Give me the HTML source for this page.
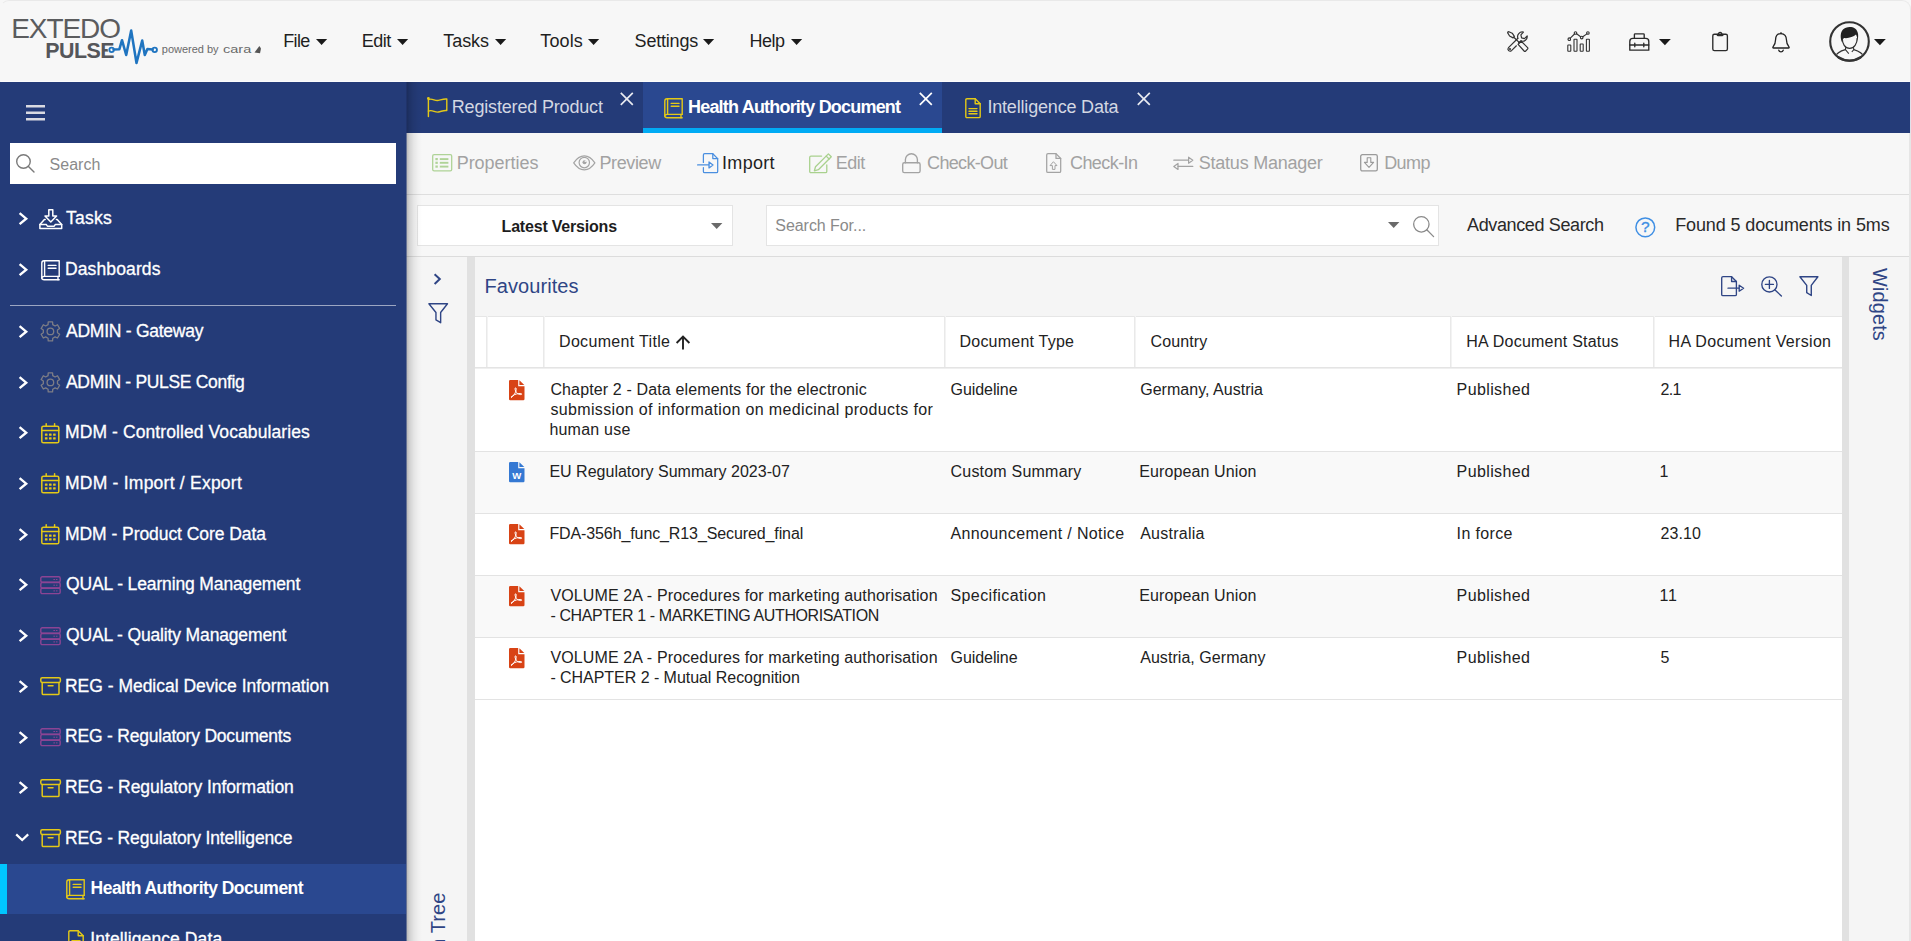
<!DOCTYPE html>
<html lang="en"><head><meta charset="utf-8"><title>EXTEDO PULSE - Health Authority Document</title>
<style>
html,body{margin:0;padding:0;background:#fff}
body{width:1911px;height:941px;overflow:hidden;font-family:"Liberation Sans", sans-serif}
#app{position:relative;width:1911px;height:941px;overflow:hidden;background:#fff;font-family:"Liberation Sans", sans-serif}
.b{position:absolute}
.t{position:absolute;white-space:pre;font-family:"Liberation Sans", sans-serif}
.ic{position:absolute;overflow:visible}
.z1{z-index:1}
.z4{z-index:4}
</style></head>
<body>
<div id="app">
<header id="app-header">
<div class="b" style="left:0px;top:0px;width:1911px;height:82px;background:#f7f7f7;"></div>
<div class="b" style="left:0px;top:81px;width:1911px;height:1px;background:#fcfcfc;"></div>
<div class="b" style="left:0;top:0;width:1911px;height:300px;box-sizing:border-box;border:1px solid #e9e9e9;border-left-color:#f7f7f7;border-bottom:none;border-radius:9px 9px 0 0"></div>
<svg class="ic z1" style="left:108px;top:28px" width="50" height="38" viewBox="0 0 50 38" ><circle cx="3.6" cy="21.8" r="3.9" fill="#f7f7f7"/><path d="M5.6 21.4 L11.4 21.2 L14.0 12.2 L18.2 27.0 L23.2 2.6 L28.5 35.0 L34.2 12.6 L36.8 27.0 L39.4 21.0 L44.6 21.4" fill="none" stroke="#1f74c0" stroke-width="2.55" stroke-linejoin="round" stroke-linecap="round"/><circle cx="3.6" cy="21.8" r="2.25" fill="none" stroke="#1f74c0" stroke-width="1.85"/><circle cx="46.7" cy="21.8" r="2.25" fill="none" stroke="#1f74c0" stroke-width="1.85"/></svg>
<svg class="ic" style="left:254px;top:45px" width="8" height="9" viewBox="0 0 8 9" ><path d="M0.5 7.6L5.4 1L7 3.6L6 8.2Z" fill="#555"/></svg>
<svg class="ic" style="left:316.2px;top:39.2px" width="11.2" height="6" viewBox="0 0 11.2 6" ><path d="M0 0H11.2L5.6 6Z" fill="#1a1a1a"/></svg>
<svg class="ic" style="left:396.7px;top:39.2px" width="11.2" height="6" viewBox="0 0 11.2 6" ><path d="M0 0H11.2L5.6 6Z" fill="#1a1a1a"/></svg>
<svg class="ic" style="left:494.7px;top:39.2px" width="11.2" height="6" viewBox="0 0 11.2 6" ><path d="M0 0H11.2L5.6 6Z" fill="#1a1a1a"/></svg>
<svg class="ic" style="left:588.4px;top:39.2px" width="11.2" height="6" viewBox="0 0 11.2 6" ><path d="M0 0H11.2L5.6 6Z" fill="#1a1a1a"/></svg>
<svg class="ic" style="left:703.4px;top:39.2px" width="11.2" height="6" viewBox="0 0 11.2 6" ><path d="M0 0H11.2L5.6 6Z" fill="#1a1a1a"/></svg>
<svg class="ic" style="left:790.5px;top:39.2px" width="11.2" height="6" viewBox="0 0 11.2 6" ><path d="M0 0H11.2L5.6 6Z" fill="#1a1a1a"/></svg>
<svg class="ic" style="left:1507px;top:31.3px" width="21.4" height="20.8" viewBox="0 0 21.4 20.8" ><g fill="none" stroke="#333" stroke-width="1.2" stroke-linecap="round" stroke-linejoin="round" ><path d="M0.7 1.9 Q0.5 0.6 1.9 0.7 L5.2 2.2 L7.4 5.4 L6.1 6.9 L2.6 5 Z"/><path d="M6.8 6.2 L12.4 11.6"/><path d="M11.1 13.3 L14.3 10.3 L20.6 16.6 Q21.2 17.4 20.5 18.2 L18.7 20 Q17.9 20.7 17.1 20 Z"/><path d="M10.9 7.3 L1.5 16.6 Q0.2 18.1 1.6 19.6 Q3.1 20.9 4.5 19.6 L9.4 14.8"/><path d="M11.6 11.4 L13.9 9.9"/><path d="M10.9 7.3 A4.7 4.7 0 0 1 16.4 1.1 L13.9 3.9 L14.6 6.8 L17.5 7.6 L20.2 4.9 A4.7 4.7 0 0 1 13.9 9.9"/><circle cx="3" cy="18.1" r="0.45"/></g></svg>
<svg class="ic" style="left:1566.5px;top:31.2px" width="23.8" height="20.8" viewBox="0 0 23.8 20.8" ><g fill="none" stroke="#333" stroke-width="1.1" stroke-linecap="round" stroke-linejoin="round"  ><rect x="0.8" y="14" width="3" height="6.2" rx="0.4"/><rect x="7" y="8.2" width="3" height="12" rx="0.4"/><rect x="13.2" y="13" width="3" height="7.2" rx="0.4"/><rect x="19.4" y="8.2" width="3" height="12" rx="0.4"/><circle cx="2.3" cy="8.2" r="1.3"/><circle cx="8.5" cy="2" r="1.3"/><circle cx="14.7" cy="6.6" r="1.3"/><circle cx="20.9" cy="2" r="1.3"/><path d="M3.3 7.2L7.5 3M9.6 2.8L13.6 5.8M15.8 5.8L19.9 2.9"/></g></svg>
<svg class="ic" style="left:1628.8px;top:32.8px" width="20.6" height="18" viewBox="0 0 20.6 18" ><g fill="none" stroke="#2b2b2b" stroke-width="1.35" stroke-linecap="round" stroke-linejoin="round" ><path d="M5.4 5.4V1.6Q5.4 0.8 6.2 0.8H14.4Q15.2 0.8 15.2 1.6V5.4"/><path d="M0.8 17.2V8.4Q0.8 5.4 3.8 5.4H16.8Q19.8 5.4 19.8 8.4V17.2Z"/><path d="M0.8 12H19.8M5.8 10.2V13.8M14.8 10.2V13.8"/></g></svg>
<svg class="ic" style="left:1658.6px;top:39.2px" width="11.8" height="6.2" viewBox="0 0 11.8 6.2" ><path d="M0 0H11.8L5.9 6.2Z" fill="#1a1a1a"/></svg>
<svg class="ic" style="left:1712px;top:31.4px" width="16.2" height="20.4" viewBox="0 0 16.2 20.4" ><g fill="none" stroke="#2b2b2b" stroke-width="1.35" stroke-linecap="round" stroke-linejoin="round" ><rect x="0.8" y="3.2" width="14.6" height="16.4" rx="1.6"/><path d="M5.2 3.4Q5.2 4.6 6.2 4.6H10Q11 4.6 11 3.4"/><path d="M6.4 3.2A1.7 1.9 0 0 1 9.8 3.2"/></g></svg>
<svg class="ic" style="left:1772px;top:31.5px" width="18" height="20.6" viewBox="0 0 18 20.6" ><g fill="none" stroke="#222" stroke-width="1.3" stroke-linecap="round" stroke-linejoin="round" ><path d="M9 1.6C5.4 1.6 3.6 4.4 3.6 7.6C3.6 11.6 2.6 13.2 0.9 15.2Q0.7 16 1.5 16H16.5Q17.3 16 17.1 15.2C15.4 13.2 14.4 11.6 14.4 7.6C14.4 4.4 12.6 1.6 9 1.6Z"/><path d="M9 1.6V0.7"/><path d="M6.8 18.2A2.3 2.3 0 0 0 11.2 18.2"/></g></svg>
<svg class="ic" style="left:1829px;top:21.2px" width="41" height="41" viewBox="0 0 41 41" ><defs><clipPath id="avc"><circle cx="20.5" cy="20.5" r="18.4"/></clipPath></defs><circle cx="20.5" cy="20.5" r="19.3" fill="none" stroke="#333" stroke-width="2.1"/><g clip-path="url(#avc)"><path d="M13.2 21.6C11.2 17.6 11 11.6 14 8.6C16.6 5.8 22.6 5.2 26 7.6C29.6 10.2 29.8 15.4 28.4 20.4C28.4 17.6 28 15.4 27 13.6C24.4 16 19.2 17.6 15 17C14 17.8 13.4 19.4 13.2 21.6Z" fill="#222"/><path d="M13.3 17.6C13.2 22.8 16 27.4 20.6 27.4C25.2 27.4 28.2 22.8 28.2 17" fill="none" stroke="#333" stroke-width="1.2"/><path d="M16.8 26.2L16.4 28.6L19.8 32.6M24.4 26.2L24.8 28.6L22.8 31" fill="none" stroke="#333" stroke-width="1.1"/><path d="M5.6 36.4C7.6 31.6 11 30 16.4 28.6M35.4 36.4C33.4 31.6 30 30 24.8 28.6" fill="none" stroke="#333" stroke-width="1.3"/></g><path d="M9.4 36.2Q20.5 43 31.6 36.2" fill="none" stroke="#333" stroke-width="2.3" stroke-linecap="round"/></svg>
<svg class="ic" style="left:1873.8px;top:39.3px" width="11.8" height="6.2" viewBox="0 0 11.8 6.2" ><path d="M0 0H11.8L5.9 6.2Z" fill="#1a1a1a"/></svg>
<span class="t" style="font-size:28px;line-height:35px;color:#5b5c5e;letter-spacing:-1.070px;left:11.20px;top:11.00px;">EXTEDO</span>
<span class="t" style="font-size:21.4px;line-height:27px;color:#55565a;font-weight:700;letter-spacing:-0.512px;left:45.30px;top:37.50px;">PULSE</span>
<span class="t" style="font-size:11px;line-height:14px;color:#6a6a6a;letter-spacing:-0.019px;left:161.80px;top:41.60px;">powered by</span>
<span class="t" style="font-size:11px;line-height:14px;color:#6a6a6a;left:222.60px;top:41.60px;transform-origin:0.00px 0;transform:scaleX(1.3195);">cara</span>
<span class="t" style="font-size:18px;line-height:22px;color:#1f1f1f;letter-spacing:-0.631px;left:283.20px;top:29.60px;">File</span>
<span class="t" style="font-size:18px;line-height:22px;color:#1f1f1f;letter-spacing:-0.505px;left:361.80px;top:29.60px;">Edit</span>
<span class="t" style="font-size:18px;line-height:22px;color:#1f1f1f;letter-spacing:-0.078px;left:443.30px;top:29.60px;">Tasks</span>
<span class="t" style="font-size:18px;line-height:22px;color:#1f1f1f;letter-spacing:0.120px;left:540.30px;top:29.60px;">Tools</span>
<span class="t" style="font-size:18px;line-height:22px;color:#1f1f1f;letter-spacing:-0.206px;left:634.60px;top:29.60px;">Settings</span>
<span class="t" style="font-size:18px;line-height:22px;color:#1f1f1f;letter-spacing:-0.470px;left:749.40px;top:29.60px;">Help</span>
</header>
<div id="tab-bar">
<div class="b" style="left:406px;top:82px;width:1505px;height:51px;background:#243b78;"></div>
<div class="b" style="left:643px;top:82px;width:299.4px;height:51px;background:#2a4890;"></div>
<div class="b" style="left:643px;top:127.8px;width:299.4px;height:5.2px;background:#01abf4;"></div>
<svg class="ic" style="left:426.7px;top:97.2px" width="20.6" height="20.4" viewBox="0 0 20.6 20.4" ><g fill="none" stroke="#e4c917" stroke-width="1.4" stroke-linecap="round" stroke-linejoin="round" ><path d="M1.4 1.6V19.6"/><path d="M1.4 2.6C5 0.6 8 4.4 11.4 3.4C14.6 2.6 16.8 1.6 19.8 2V13.6C16.8 13.2 14.6 14.4 11.4 15C8 15.8 5 12.2 1.4 14.2"/><circle cx="1.4" cy="1.3" r="0.7"/></g></svg>
<svg class="ic" style="left:620.4px;top:92.0px" width="13.6" height="13.6" viewBox="0 0 13.6 13.6" ><path d="M0.8 0.8L12.799999999999999 12.799999999999999M12.799999999999999 0.8L0.8 12.799999999999999" stroke="#e8eaf0" stroke-width="1.7" fill="none"/></svg>
<svg class="ic" style="left:664.3px;top:97.5px" width="19" height="20.5" viewBox="0 0 19 20.5" ><g fill="none" stroke="#e4c917" stroke-width="1.4" stroke-linecap="round" stroke-linejoin="round"  stroke-linejoin="miter"><path d="M18.2 16.4H3.2Q0.8 16.4 0.8 18.1Q0.8 19.7 3.2 19.7H18.2"/><path d="M0.8 18V3Q0.8 0.8 3 0.8H18.2V16.4"/><path d="M3.6 0.8V16.4"/><path d="M7.2 5.4H15M7.2 8.2H15"/><path d="M17 16.4V19.7"/></g></svg>
<svg class="ic" style="left:919.4px;top:92.0px" width="13.6" height="13.6" viewBox="0 0 13.6 13.6" ><path d="M0.8 0.8L12.799999999999999 12.799999999999999M12.799999999999999 0.8L0.8 12.799999999999999" stroke="#fff" stroke-width="1.7" fill="none"/></svg>
<svg class="ic" style="left:965px;top:97.6px" width="16" height="20.4" viewBox="0 0 16 20.4" ><g fill="none" stroke="#e4c917" stroke-width="1.4" stroke-linecap="round" stroke-linejoin="round"  stroke-linejoin="miter"><path d="M0.8 2Q0.8 0.8 2 0.8H10.2L15.2 5.8V18.4Q15.2 19.6 14 19.6H2Q0.8 19.6 0.8 18.4Z"/><path d="M10.2 0.8V5.8H15.2"/><path d="M4 10.6H12M4 13.2H12M4 15.8H12"/></g></svg>
<svg class="ic" style="left:1136.9px;top:92.0px" width="13.6" height="13.6" viewBox="0 0 13.6 13.6" ><path d="M0.8 0.8L12.799999999999999 12.799999999999999M12.799999999999999 0.8L0.8 12.799999999999999" stroke="#e8eaf0" stroke-width="1.7" fill="none"/></svg>
<span class="t" style="font-size:18px;line-height:22px;color:#d3d7e2;letter-spacing:-0.175px;left:451.80px;top:95.60px;">Registered Product</span>
<span class="t" style="font-size:18px;line-height:22px;color:#fff;font-weight:700;letter-spacing:-0.805px;left:688.00px;top:95.60px;">Health Authority Document</span>
<span class="t" style="font-size:18px;line-height:22px;color:#d3d7e2;letter-spacing:-0.180px;left:987.40px;top:95.60px;">Intelligence Data</span>
</div>
<div id="toolbar">
<div class="b" style="left:406px;top:133px;width:1505px;height:61px;background:#f7f7f7;"></div>
<div class="b" style="left:406px;top:194px;width:1505px;height:1px;background:#dedede;"></div>
<svg class="ic" style="left:431.7px;top:154.4px" width="20.4" height="17.6" viewBox="0 0 20.4 17.6" ><rect x="0.7" y="0.7" width="19" height="16.2" rx="1.4" fill="none" stroke="#afd397" stroke-width="1.3" stroke-linecap="round" stroke-linejoin="round" /><rect x="3.4" y="3.9999999999999996" width="2.4" height="2.2" fill="#afd397"/><path d="M7.8 5.1H16.4" stroke="#afd397" stroke-width="1.9" fill="none"/><rect x="3.4" y="7.700000000000001" width="2.4" height="2.2" fill="#afd397"/><path d="M7.8 8.8H16.4" stroke="#afd397" stroke-width="1.9" fill="none"/><rect x="3.4" y="11.5" width="2.4" height="2.2" fill="#afd397"/><path d="M7.8 12.6H16.4" stroke="#afd397" stroke-width="1.9" fill="none"/></svg>
<svg class="ic" style="left:572.9px;top:155.4px" width="22.6" height="15.6" viewBox="0 0 22.6 15.6" ><g fill="none" stroke="#a4a4a4" stroke-width="1.2" stroke-linecap="round" stroke-linejoin="round" ><path d="M0.7 7.8C5 1.4 8.4 0.8 11.3 0.8C14.2 0.8 17.6 1.4 21.9 7.8C17.6 14.2 14.2 14.8 11.3 14.8C8.4 14.8 5 14.2 0.7 7.8Z"/><circle cx="11.3" cy="7.6" r="5.2"/></g><circle cx="11.5" cy="7.2" r="2" fill="#a4a4a4"/><circle cx="12.3" cy="6.2" r="0.8" fill="#f7f7f7"/></svg>
<svg class="ic" style="left:696.6px;top:153px" width="21.4" height="20.4" viewBox="0 0 21.4 20.4" ><g fill="none" stroke="#4a8fe0" stroke-width="1.25" stroke-linecap="round" stroke-linejoin="round"  stroke-linejoin="miter"><path d="M6.4 9.4V2Q6.4 0.7 7.7 0.7H15.8L20.7 5.6V18.4Q20.7 19.7 19.4 19.7H7.7Q6.4 19.7 6.4 18.4V14.6"/><path d="M15.8 0.7V5.6H20.7"/><path d="M0.6 12H12"/><path d="M12 9V15L16 12Z"/></g></svg>
<svg class="ic" style="left:808.7px;top:153px" width="23.2" height="20.4" viewBox="0 0 23.2 20.4" ><g fill="none" stroke="#a9d18e" stroke-width="1.3" stroke-linecap="round" stroke-linejoin="round" ><path d="M17.8 12V18.4Q17.8 19.7 16.5 19.7H2Q0.7 19.7 0.7 18.4V4.4Q0.7 3.1 2 3.1H12.6"/><path d="M19.4 0.9L22.3 3.8L9.4 16.7L5.4 17.8L6.5 13.8Z"/><path d="M17.2 3.1L20.1 6"/></g></svg>
<svg class="ic" style="left:902px;top:153px" width="18.8" height="20.4" viewBox="0 0 18.8 20.4" ><g fill="none" stroke="#a3a3a3" stroke-width="1.35" stroke-linecap="round" stroke-linejoin="round" ><rect x="0.7" y="9.8" width="17.4" height="9.9" rx="1.6"/><path d="M3.4 9.8V6.6A6 5.9 0 0 1 15.4 6.6V9.8"/></g></svg>
<svg class="ic" style="left:1046.2px;top:153.1px" width="15.4" height="20.2" viewBox="0 0 15.4 20.2" ><g fill="none" stroke="#a3a3a3" stroke-width="1.25" stroke-linecap="round" stroke-linejoin="round"  stroke-linejoin="miter"><path d="M0.7 2Q0.7 0.7 2 0.7H10L14.7 5.4V18.2Q14.7 19.5 13.4 19.5H2Q0.7 19.5 0.7 18.2Z"/><path d="M10 0.7V5.4H14.7"/><path d="M7.7 9L11 12.6H9V16.4H6.4V12.6H4.4Z" stroke-width="1"/></g></svg>
<svg class="ic" style="left:1172.8px;top:156.1px" width="20.6" height="14.4" viewBox="0 0 20.6 14.4" ><g fill="none" stroke="#a3a3a3" stroke-width="1.2" stroke-linecap="round" stroke-linejoin="round"  stroke-linejoin="miter"><path d="M0.8 4.2H15.6"/><path d="M15.6 1.2V7.2L19.8 4.2Z"/><path d="M19.8 10.4H5"/><path d="M5 7.4V13.4L0.8 10.4Z"/></g></svg>
<svg class="ic" style="left:1360.2px;top:154.4px" width="18" height="17.6" viewBox="0 0 18 17.6" ><g fill="none" stroke="#9a9a9a" stroke-width="1.3" stroke-linecap="round" stroke-linejoin="round"  stroke-linejoin="miter"><rect x="0.7" y="0.7" width="16.6" height="16.2" rx="1.6"/><path d="M7.2 3.8H10.8V8.4H13.6L9 13.4L4.4 8.4H7.2Z" stroke-width="1.1"/></g></svg>
<span class="t" style="font-size:18px;line-height:22px;color:#a2a2a2;letter-spacing:-0.037px;left:456.70px;top:151.50px;">Properties</span>
<span class="t" style="font-size:18px;line-height:22px;color:#a2a2a2;letter-spacing:-0.387px;left:599.50px;top:151.50px;">Preview</span>
<span class="t" style="font-size:18px;line-height:22px;color:#1f1f1f;letter-spacing:0.278px;left:722.10px;top:151.50px;">Import</span>
<span class="t" style="font-size:18px;line-height:22px;color:#a2a2a2;letter-spacing:-0.505px;left:835.70px;top:151.50px;">Edit</span>
<span class="t" style="font-size:18px;line-height:22px;color:#a2a2a2;letter-spacing:-0.666px;left:927.10px;top:151.50px;">Check-Out</span>
<span class="t" style="font-size:18px;line-height:22px;color:#a2a2a2;letter-spacing:-0.574px;left:1070.00px;top:151.50px;">Check-In</span>
<span class="t" style="font-size:18px;line-height:22px;color:#a2a2a2;letter-spacing:-0.237px;left:1198.80px;top:151.50px;">Status Manager</span>
<span class="t" style="font-size:18px;line-height:22px;color:#a2a2a2;letter-spacing:-0.568px;left:1384.20px;top:151.50px;">Dump</span>
</div>
<div id="search-row">
<div class="b" style="left:406px;top:195px;width:1505px;height:61px;background:#f7f7f7;"></div>
<div class="b" style="left:406px;top:256px;width:1505px;height:1px;background:#dcdcdc;"></div>
<div class="b" style="left:416.6px;top:205.4px;width:316.6px;height:40.2px;background:#fff;border:1px solid #e4e4e4;box-sizing:border-box"></div>
<div class="b" style="left:766.2px;top:205.4px;width:673.2px;height:40.2px;background:#fff;border:1px solid #e4e4e4;box-sizing:border-box"></div>
<svg class="ic" style="left:711px;top:223px" width="11.4" height="6" viewBox="0 0 11.4 6" ><path d="M0 0H11.4L5.7 6Z" fill="#6a6a6a"/></svg>
<svg class="ic" style="left:1387.6px;top:222.2px" width="11.4" height="6" viewBox="0 0 11.4 6" ><path d="M0 0H11.4L5.7 6Z" fill="#6a6a6a"/></svg>
<svg class="ic" style="left:1413px;top:216px" width="21.4" height="21.4" viewBox="0 0 21.4 21.4" ><g fill="none" stroke="#8a8a8a" stroke-width="1.3" stroke-linecap="round" stroke-linejoin="round" ><circle cx="8.35" cy="8.35" r="7.70"/><path d="M13.80 13.80L20.60 20.60"/></g></svg>
<svg class="ic" style="left:1635.3px;top:216.8px" width="20.6" height="20.6" viewBox="0 0 20.6 20.6" ><circle cx="10.3" cy="10.3" r="9.4" fill="none" stroke="#3f8fe4" stroke-width="1.5" stroke-linecap="round" stroke-linejoin="round" /><text x="10.3" y="15.4" text-anchor="middle" font-family="Liberation Sans, sans-serif" font-size="15.5" fill="#3f8fe4" stroke="#3f8fe4" stroke-width="0.35">?</text></svg>
<span class="t" style="font-size:16px;line-height:20px;color:#1d1d1d;font-weight:700;letter-spacing:-0.198px;left:501.60px;top:216.80px;">Latest Versions</span>
<span class="t" style="font-size:16px;line-height:20px;color:#8a8a8a;letter-spacing:-0.054px;left:775.30px;top:216.40px;">Search For...</span>
<span class="t" style="font-size:18px;line-height:22px;color:#2a2a2a;letter-spacing:-0.363px;left:1467.00px;top:213.80px;">Advanced Search</span>
<span class="t" style="font-size:18px;line-height:22px;color:#2a2a2a;letter-spacing:-0.114px;left:1675.20px;top:213.80px;">Found 5 documents in 5ms</span>
</div>
<main id="content">
<div class="b" style="left:406px;top:257px;width:61.6px;height:684px;background:#f5f5f5;"></div>
<div class="b" style="left:467px;top:257px;width:8px;height:684px;background:#e1e1e1;"></div>
<div class="b" style="left:474.6px;top:257px;width:1367.4px;height:58.6px;background:#f5f5f5;"></div>
<div class="b" style="left:474.6px;top:315.6px;width:1367.4px;height:625.4px;background:#fff;"></div>
<div class="b" style="left:1842px;top:257px;width:7px;height:684px;background:#e1e1e1;"></div>
<div class="b" style="left:1849px;top:257px;width:62px;height:684px;background:#f5f5f5;"></div>
<div class="b" style="left:1909.2px;top:133px;width:1.8px;height:808px;background:#e6e6e6;"></div>
<div class="b" style="left:1910px;top:82px;width:1px;height:51px;background:#dfe1ea;"></div>
<div class="b" style="left:474.6px;top:315.6px;width:1367.4px;height:1px;background:#e6e6e6;"></div>
<div class="b" style="left:474.6px;top:367px;width:1367.4px;height:1px;background:#e4e4e4;"></div>
<div class="b" style="left:474.6px;top:368px;width:1367.4px;height:1px;background:#efefef;"></div>
<div class="b" style="left:486px;top:316px;width:1px;height:51px;background:#e9e9e9;"></div>
<div class="b" style="left:487px;top:316px;width:1px;height:51px;background:#f3f3f3;"></div>
<div class="b" style="left:543px;top:316px;width:1px;height:51px;background:#e9e9e9;"></div>
<div class="b" style="left:544px;top:316px;width:1px;height:51px;background:#f3f3f3;"></div>
<div class="b" style="left:944px;top:316px;width:1px;height:51px;background:#e9e9e9;"></div>
<div class="b" style="left:945px;top:316px;width:1px;height:51px;background:#f3f3f3;"></div>
<div class="b" style="left:1134px;top:316px;width:1px;height:51px;background:#e9e9e9;"></div>
<div class="b" style="left:1135px;top:316px;width:1px;height:51px;background:#f3f3f3;"></div>
<div class="b" style="left:1450px;top:316px;width:1px;height:51px;background:#e9e9e9;"></div>
<div class="b" style="left:1451px;top:316px;width:1px;height:51px;background:#f3f3f3;"></div>
<div class="b" style="left:1653px;top:316px;width:1px;height:51px;background:#e9e9e9;"></div>
<div class="b" style="left:1654px;top:316px;width:1px;height:51px;background:#f3f3f3;"></div>
<div class="b" style="left:474.6px;top:450.5px;width:1367.4px;height:1.4px;background:#e3e3e3;"></div>
<div class="b" style="left:474.6px;top:451.5px;width:1367.4px;height:62.0px;background:#f9f9f9;"></div>
<div class="b" style="left:474.6px;top:512.5px;width:1367.4px;height:1.4px;background:#e3e3e3;"></div>
<div class="b" style="left:474.6px;top:574.5px;width:1367.4px;height:1.4px;background:#e3e3e3;"></div>
<div class="b" style="left:474.6px;top:575.5px;width:1367.4px;height:62.0px;background:#f9f9f9;"></div>
<div class="b" style="left:474.6px;top:636.5px;width:1367.4px;height:1.4px;background:#e3e3e3;"></div>
<div class="b" style="left:474.6px;top:698.5px;width:1367.4px;height:1.4px;background:#e3e3e3;"></div>
<svg class="ic" style="left:433.4px;top:273.4px" width="8.4" height="12.2" viewBox="0 0 8.4 12.2" ><path d="M1.6 1.2 L6.800000000000001 6.1 L1.6 11.0" fill="none" stroke="#2f4585" stroke-width="2.0" stroke-linejoin="miter"/></svg>
<svg class="ic" style="left:427.6px;top:302.6px" width="20.4" height="20.6" viewBox="0 0 20.4 20.6" ><path d="M0.9 0.8H19.5L12.65 9.48V19.700000000000003L7.96 16.89V9.48Z" fill="none" stroke="#2f4585" stroke-width="1.4" stroke-linecap="round" stroke-linejoin="round"  stroke-linejoin="miter"/></svg>
<svg class="ic" style="left:1721.2px;top:275.8px" width="23.4" height="20.4" viewBox="0 0 23.4 20.4" ><g fill="none" stroke="#2f4585" stroke-width="1.35" stroke-linecap="round" stroke-linejoin="round"  stroke-linejoin="miter"><path d="M15.4 5.5V18.4Q15.4 19.7 14.1 19.7H2Q0.7 19.7 0.7 18.4V2Q0.7 0.7 2 0.7H10.6L15.4 5.5"/><path d="M10.6 0.7V5.5H15.4"/><path d="M7 12.2H18"/><path d="M18.2 9.2V15.2L22.6 12.2Z"/></g></svg>
<svg class="ic" style="left:1760.6px;top:276px" width="21.4" height="20.8" viewBox="0 0 21.4 20.8" ><g fill="none" stroke="#2f4585" stroke-width="1.35" stroke-linecap="round" stroke-linejoin="round" ><circle cx="8.4" cy="8.4" r="7.6"/><path d="M13.8 13.8L20.4 20"/><path d="M4.4 8.4H12.4M8.4 4.4V12.4"/></g></svg>
<svg class="ic" style="left:1799.2px;top:275.9px" width="19.8" height="20.4" viewBox="0 0 19.8 20.4" ><path d="M0.9 0.8H18.900000000000002L12.28 9.38V19.5L7.72 16.73V9.38Z" fill="none" stroke="#2f4585" stroke-width="1.4" stroke-linecap="round" stroke-linejoin="round"  stroke-linejoin="miter"/></svg>
<svg class="ic" style="left:675px;top:334.6px" width="16" height="15" viewBox="0 0 16 15" ><path d="M8 14.4V1.6M1.6 8L8 1.6L14.4 8" fill="none" stroke="#222" stroke-width="1.9"/></svg>
<svg class="ic" style="left:508.8px;top:379.90000000000003px" width="15.5" height="20.3" viewBox="0 0 15.5 20.3" ><path d="M1.2 0H9.2V6.2H15.5V19.1Q15.5 20.3 14.3 20.3H1.2Q0 20.3 0 19.1V1.2Q0 0 1.2 0Z" fill="#d84315"/><path d="M10.4 0.2L15.3 5H10.4Z" fill="#d84315"/><g fill="none" stroke="#fff" stroke-width="1" stroke-linecap="round" stroke-linejoin="round"><path d="M2.6 17.2C4.4 16.4 6.2 13.6 7 10.6C7.4 9 7.2 7.8 6.6 7.8C6 7.8 5.8 9.2 6.6 11C7.6 13.2 9.6 14.6 11.8 14.6C13 14.6 13 13.6 11.8 13.5C9.4 13.3 5.6 14.2 3.4 15.8C2.4 16.6 2.2 17.4 2.6 17.2Z"/></g></svg>
<svg class="ic" style="left:508.8px;top:462.0px" width="15.5" height="20.3" viewBox="0 0 15.5 20.3" ><path d="M1.2 0H9.2V6.2H15.5V19.1Q15.5 20.3 14.3 20.3H1.2Q0 20.3 0 19.1V1.2Q0 0 1.2 0Z" fill="#3579d3"/><path d="M10.4 0.2L15.3 5H10.4Z" fill="#3579d3"/><text x="7.7" y="17.4" text-anchor="middle" font-family="Liberation Sans, sans-serif" font-weight="700" font-size="9.6" fill="#fff">W</text></svg>
<svg class="ic" style="left:508.8px;top:524.0px" width="15.5" height="20.3" viewBox="0 0 15.5 20.3" ><path d="M1.2 0H9.2V6.2H15.5V19.1Q15.5 20.3 14.3 20.3H1.2Q0 20.3 0 19.1V1.2Q0 0 1.2 0Z" fill="#d84315"/><path d="M10.4 0.2L15.3 5H10.4Z" fill="#d84315"/><g fill="none" stroke="#fff" stroke-width="1" stroke-linecap="round" stroke-linejoin="round"><path d="M2.6 17.2C4.4 16.4 6.2 13.6 7 10.6C7.4 9 7.2 7.8 6.6 7.8C6 7.8 5.8 9.2 6.6 11C7.6 13.2 9.6 14.6 11.8 14.6C13 14.6 13 13.6 11.8 13.5C9.4 13.3 5.6 14.2 3.4 15.8C2.4 16.6 2.2 17.4 2.6 17.2Z"/></g></svg>
<svg class="ic" style="left:508.8px;top:586.0px" width="15.5" height="20.3" viewBox="0 0 15.5 20.3" ><path d="M1.2 0H9.2V6.2H15.5V19.1Q15.5 20.3 14.3 20.3H1.2Q0 20.3 0 19.1V1.2Q0 0 1.2 0Z" fill="#d84315"/><path d="M10.4 0.2L15.3 5H10.4Z" fill="#d84315"/><g fill="none" stroke="#fff" stroke-width="1" stroke-linecap="round" stroke-linejoin="round"><path d="M2.6 17.2C4.4 16.4 6.2 13.6 7 10.6C7.4 9 7.2 7.8 6.6 7.8C6 7.8 5.8 9.2 6.6 11C7.6 13.2 9.6 14.6 11.8 14.6C13 14.6 13 13.6 11.8 13.5C9.4 13.3 5.6 14.2 3.4 15.8C2.4 16.6 2.2 17.4 2.6 17.2Z"/></g></svg>
<svg class="ic" style="left:508.8px;top:648.0px" width="15.5" height="20.3" viewBox="0 0 15.5 20.3" ><path d="M1.2 0H9.2V6.2H15.5V19.1Q15.5 20.3 14.3 20.3H1.2Q0 20.3 0 19.1V1.2Q0 0 1.2 0Z" fill="#d84315"/><path d="M10.4 0.2L15.3 5H10.4Z" fill="#d84315"/><g fill="none" stroke="#fff" stroke-width="1" stroke-linecap="round" stroke-linejoin="round"><path d="M2.6 17.2C4.4 16.4 6.2 13.6 7 10.6C7.4 9 7.2 7.8 6.6 7.8C6 7.8 5.8 9.2 6.6 11C7.6 13.2 9.6 14.6 11.8 14.6C13 14.6 13 13.6 11.8 13.5C9.4 13.3 5.6 14.2 3.4 15.8C2.4 16.6 2.2 17.4 2.6 17.2Z"/></g></svg>
<span class="t" style="font-size:20px;line-height:25px;color:#2f4585;letter-spacing:0.059px;left:484.60px;top:273.50px;">Favourites</span>
<span class="t" style="font-size:20px;line-height:25px;color:#2f4585;letter-spacing:0.092px;left:1873.4px;top:267.6px;transform-origin:0 0;transform:rotate(90deg) translate(0.00px,-19.00px);">Widgets</span>
<span class="t" style="font-size:20px;line-height:25px;color:#2f4585;letter-spacing:0.099px;left:445.0px;top:1033.2px;transform-origin:0 0;transform:rotate(-90deg) translate(-1.00px,-19.00px);">Navigation Tree</span>
<span class="t" style="font-size:16px;line-height:20px;color:#222;letter-spacing:0.331px;left:559.00px;top:331.80px;">Document Title</span>
<span class="t" style="font-size:16px;line-height:20px;color:#222;letter-spacing:0.220px;left:959.50px;top:331.80px;">Document Type</span>
<span class="t" style="font-size:16px;line-height:20px;color:#222;letter-spacing:0.113px;left:1150.50px;top:331.80px;">Country</span>
<span class="t" style="font-size:16px;line-height:20px;color:#222;letter-spacing:0.224px;left:1466.30px;top:331.80px;">HA Document Status</span>
<span class="t" style="font-size:16px;line-height:20px;color:#222;letter-spacing:0.327px;left:1668.60px;top:331.80px;">HA Document Version</span>
<span class="t" style="font-size:16px;line-height:20px;color:#222;letter-spacing:0.138px;left:550.40px;top:380.10px;">Chapter 2 - Data elements for the electronic</span>
<span class="t" style="font-size:16px;line-height:20px;color:#222;letter-spacing:0.356px;left:550.40px;top:400.20px;">submission of information on medicinal products for</span>
<span class="t" style="font-size:16px;line-height:20px;color:#222;letter-spacing:0.217px;left:549.40px;top:420.30px;">human use</span>
<span class="t" style="font-size:16px;line-height:20px;color:#222;letter-spacing:-0.063px;left:950.50px;top:380.10px;">Guideline</span>
<span class="t" style="font-size:16px;line-height:20px;color:#222;letter-spacing:0.027px;left:1140.20px;top:380.10px;">Germany, Austria</span>
<span class="t" style="font-size:16px;line-height:20px;color:#222;letter-spacing:0.378px;left:1456.60px;top:380.10px;">Published</span>
<span class="t" style="font-size:16px;line-height:20px;color:#222;letter-spacing:-0.722px;left:1660.60px;top:380.10px;">2.1</span>
<span class="t" style="font-size:16px;line-height:20px;color:#222;letter-spacing:0.010px;left:549.40px;top:462.20px;">EU Regulatory Summary 2023-07</span>
<span class="t" style="font-size:16px;line-height:20px;color:#222;letter-spacing:0.214px;left:950.50px;top:462.20px;">Custom Summary</span>
<span class="t" style="font-size:16px;line-height:20px;color:#222;letter-spacing:0.120px;left:1139.20px;top:462.20px;">European Union</span>
<span class="t" style="font-size:16px;line-height:20px;color:#222;letter-spacing:0.378px;left:1456.60px;top:462.20px;">Published</span>
<span class="t" style="font-size:16px;line-height:20px;color:#222;left:1659.60px;top:462.20px;">1</span>
<span class="t" style="font-size:16px;line-height:20px;color:#222;letter-spacing:-0.107px;left:549.40px;top:524.20px;">FDA-356h_func_R13_Secured_final</span>
<span class="t" style="font-size:16px;line-height:20px;color:#222;letter-spacing:0.364px;left:950.50px;top:524.20px;">Announcement / Notice</span>
<span class="t" style="font-size:16px;line-height:20px;color:#222;letter-spacing:0.244px;left:1140.20px;top:524.20px;">Australia</span>
<span class="t" style="font-size:16px;line-height:20px;color:#222;letter-spacing:0.348px;left:1456.60px;top:524.20px;">In force</span>
<span class="t" style="font-size:16px;line-height:20px;color:#222;letter-spacing:0.065px;left:1660.60px;top:524.20px;">23.10</span>
<span class="t" style="font-size:16px;line-height:20px;color:#222;letter-spacing:0.133px;left:550.40px;top:586.20px;">VOLUME 2A - Procedures for marketing authorisation</span>
<span class="t" style="font-size:16px;line-height:20px;color:#222;letter-spacing:-0.388px;left:550.40px;top:606.30px;">- CHAPTER 1 - MARKETING AUTHORISATION</span>
<span class="t" style="font-size:16px;line-height:20px;color:#222;letter-spacing:0.390px;left:950.50px;top:586.20px;">Specification</span>
<span class="t" style="font-size:16px;line-height:20px;color:#222;letter-spacing:0.120px;left:1139.20px;top:586.20px;">European Union</span>
<span class="t" style="font-size:16px;line-height:20px;color:#222;letter-spacing:0.378px;left:1456.60px;top:586.20px;">Published</span>
<span class="t" style="font-size:16px;line-height:20px;color:#222;letter-spacing:0.689px;left:1659.60px;top:586.20px;">11</span>
<span class="t" style="font-size:16px;line-height:20px;color:#222;letter-spacing:0.133px;left:550.40px;top:648.20px;">VOLUME 2A - Procedures for marketing authorisation</span>
<span class="t" style="font-size:16px;line-height:20px;color:#222;letter-spacing:-0.041px;left:550.40px;top:668.30px;">- CHAPTER 2 - Mutual Recognition</span>
<span class="t" style="font-size:16px;line-height:20px;color:#222;letter-spacing:-0.063px;left:950.50px;top:648.20px;">Guideline</span>
<span class="t" style="font-size:16px;line-height:20px;color:#222;letter-spacing:0.054px;left:1140.20px;top:648.20px;">Austria, Germany</span>
<span class="t" style="font-size:16px;line-height:20px;color:#222;letter-spacing:0.378px;left:1456.60px;top:648.20px;">Published</span>
<span class="t" style="font-size:16px;line-height:20px;color:#222;left:1660.60px;top:648.20px;">5</span>
</main>
<nav id="sidebar">
<div class="b" style="left:0px;top:82px;width:406px;height:859px;background:#243b78;z-index:3"></div>
<div class="b" style="left:406px;top:82px;width:16px;height:859px;background:linear-gradient(90deg,rgba(0,0,0,.27),rgba(0,0,0,.15) 22%,rgba(0,0,0,.07) 48%,rgba(0,0,0,.025) 75%,rgba(0,0,0,0));z-index:3"></div>
<div class="b" style="left:406px;top:82px;width:1px;height:859px;background:rgba(36,59,120,.55);z-index:3"></div>
<div class="b" style="left:10px;top:143px;width:386px;height:40.6px;background:#fff;z-index:4"></div>
<div class="b" style="left:10px;top:305px;width:386px;height:1.4px;background:rgba(255,255,255,.55);z-index:4"></div>
<div class="b" style="left:0px;top:863.7px;width:406px;height:50.4px;background:#2a4890;z-index:4"></div>
<div class="b" style="left:0px;top:863.7px;width:7px;height:50.4px;background:#00c6ff;z-index:4"></div>
<svg class="ic z4" style="left:26px;top:105px" width="19" height="15.6" viewBox="0 0 19 15.6" ><path d="M0 1.3H19M0 7.8H19M0 14.2H19" stroke="#d9dae2" stroke-width="2.6" fill="none"/></svg>
<svg class="ic z4" style="left:16.4px;top:153.8px" width="18.8" height="18.8" viewBox="0 0 18.8 18.8" ><g fill="none" stroke="#7a7a7a" stroke-width="1.4" stroke-linecap="round" stroke-linejoin="round" ><circle cx="7.47" cy="7.47" r="6.77"/><path d="M12.25 12.25L18.00 18.00"/></g></svg>
<svg class="ic z4" style="left:17.9px;top:211.9px" width="9.8" height="13.4" viewBox="0 0 9.8 13.4" ><path d="M1.6 1.2 L8.200000000000001 6.7 L1.6 12.200000000000001" fill="none" stroke="#fff" stroke-width="2.4" stroke-linejoin="miter"/></svg>
<svg class="ic z4" style="left:38.8px;top:208.8px" width="23.6" height="20.4" viewBox="0 0 23.6 20.4" ><g fill="none" stroke="#fff" stroke-width="1.5" stroke-linecap="round" stroke-linejoin="round"  stroke-linejoin="miter"><path d="M9.8 0.8H13.8V7H17.6L11.8 13L6 7H9.8Z"/><path d="M6.2 10.4H5.4L0.9 15.4V19.5H22.7V15.4L18.2 10.4H17.4"/><path d="M0.9 15.4H7.2L8.4 17.2H15.2L16.4 15.4H22.7"/></g></svg>
<svg class="ic z4" style="left:17.9px;top:262.6px" width="9.8" height="13.4" viewBox="0 0 9.8 13.4" ><path d="M1.6 1.2 L8.200000000000001 6.7 L1.6 12.200000000000001" fill="none" stroke="#fff" stroke-width="2.4" stroke-linejoin="miter"/></svg>
<svg class="ic z4" style="left:41.3px;top:259.5px" width="19" height="20.5" viewBox="0 0 19 20.5" ><g fill="none" stroke="#fff" stroke-width="1.4" stroke-linecap="round" stroke-linejoin="round"  stroke-linejoin="miter"><path d="M18.2 16.4H3.2Q0.8 16.4 0.8 18.1Q0.8 19.7 3.2 19.7H18.2"/><path d="M0.8 18V3Q0.8 0.8 3 0.8H18.2V16.4"/><path d="M3.6 0.8V16.4"/><path d="M7.2 5.4H15M7.2 8.2H15"/><path d="M17 16.4V19.7"/></g></svg>
<svg class="ic z4" style="left:17.9px;top:324.90000000000003px" width="9.8" height="13.4" viewBox="0 0 9.8 13.4" ><path d="M1.6 1.2 L8.200000000000001 6.7 L1.6 12.200000000000001" fill="none" stroke="#fff" stroke-width="2.4" stroke-linejoin="miter"/></svg>
<svg class="ic z4" style="left:40.2px;top:321.2px" width="20.8" height="20.8" viewBox="0 0 20.8 20.8" ><g fill="none" stroke="#7d7d86" stroke-width="1.3" stroke-linecap="round" stroke-linejoin="round" ><path d="M8.06 3.59 L8.22 0.95 L12.58 0.95 L12.74 3.59 L15.12 4.97 L17.49 3.78 L19.68 7.56 L17.47 9.03 L17.47 11.77 L19.68 13.24 L17.49 17.02 L15.12 15.83 L12.74 17.21 L12.58 19.85 L8.22 19.85 L8.06 17.21 L5.68 15.83 L3.31 17.02 L1.12 13.24 L3.33 11.77 L3.33 9.03 L1.12 7.56 L3.31 3.78 L5.68 4.97Z"/><circle cx="10.4" cy="10.4" r="3.3"/></g></svg>
<svg class="ic z4" style="left:17.9px;top:375.6px" width="9.8" height="13.4" viewBox="0 0 9.8 13.4" ><path d="M1.6 1.2 L8.200000000000001 6.7 L1.6 12.200000000000001" fill="none" stroke="#fff" stroke-width="2.4" stroke-linejoin="miter"/></svg>
<svg class="ic z4" style="left:40.2px;top:371.9px" width="20.8" height="20.8" viewBox="0 0 20.8 20.8" ><g fill="none" stroke="#7d7d86" stroke-width="1.3" stroke-linecap="round" stroke-linejoin="round" ><path d="M8.06 3.59 L8.22 0.95 L12.58 0.95 L12.74 3.59 L15.12 4.97 L17.49 3.78 L19.68 7.56 L17.47 9.03 L17.47 11.77 L19.68 13.24 L17.49 17.02 L15.12 15.83 L12.74 17.21 L12.58 19.85 L8.22 19.85 L8.06 17.21 L5.68 15.83 L3.31 17.02 L1.12 13.24 L3.33 11.77 L3.33 9.03 L1.12 7.56 L3.31 3.78 L5.68 4.97Z"/><circle cx="10.4" cy="10.4" r="3.3"/></g></svg>
<svg class="ic z4" style="left:17.9px;top:426.3px" width="9.8" height="13.4" viewBox="0 0 9.8 13.4" ><path d="M1.6 1.2 L8.200000000000001 6.7 L1.6 12.200000000000001" fill="none" stroke="#fff" stroke-width="2.4" stroke-linejoin="miter"/></svg>
<svg class="ic z4" style="left:41.2px;top:422.7px" width="18.6" height="20.6" viewBox="0 0 18.6 20.6" ><g fill="none" stroke="#e4c917" stroke-width="1.5" stroke-linecap="round" stroke-linejoin="round" ><rect x="0.8" y="3.2" width="17" height="16.6" rx="1.6"/><path d="M0.8 7.6H17.8M5.2 0.8V3.2M13.6 0.8V3.2"/></g><g fill="#e4c917"><rect x="3.9" y="10.4" width="2.6" height="2.4" rx="0.5"/><rect x="8" y="10.4" width="2.6" height="2.4" rx="0.5"/><rect x="12.1" y="10.4" width="2.6" height="2.4" rx="0.5"/><rect x="3.9" y="14.2" width="2.6" height="2.4" rx="0.5"/><rect x="8" y="14.2" width="2.6" height="2.4" rx="0.5"/><rect x="12.1" y="14.2" width="2.6" height="2.4" rx="0.5"/></g></svg>
<svg class="ic z4" style="left:17.9px;top:477.0px" width="9.8" height="13.4" viewBox="0 0 9.8 13.4" ><path d="M1.6 1.2 L8.200000000000001 6.7 L1.6 12.200000000000001" fill="none" stroke="#fff" stroke-width="2.4" stroke-linejoin="miter"/></svg>
<svg class="ic z4" style="left:41.2px;top:473.4px" width="18.6" height="20.6" viewBox="0 0 18.6 20.6" ><g fill="none" stroke="#e4c917" stroke-width="1.5" stroke-linecap="round" stroke-linejoin="round" ><rect x="0.8" y="3.2" width="17" height="16.6" rx="1.6"/><path d="M0.8 7.6H17.8M5.2 0.8V3.2M13.6 0.8V3.2"/></g><g fill="#e4c917"><rect x="3.9" y="10.4" width="2.6" height="2.4" rx="0.5"/><rect x="8" y="10.4" width="2.6" height="2.4" rx="0.5"/><rect x="12.1" y="10.4" width="2.6" height="2.4" rx="0.5"/><rect x="3.9" y="14.2" width="2.6" height="2.4" rx="0.5"/><rect x="8" y="14.2" width="2.6" height="2.4" rx="0.5"/><rect x="12.1" y="14.2" width="2.6" height="2.4" rx="0.5"/></g></svg>
<svg class="ic z4" style="left:17.9px;top:527.7px" width="9.8" height="13.4" viewBox="0 0 9.8 13.4" ><path d="M1.6 1.2 L8.200000000000001 6.7 L1.6 12.200000000000001" fill="none" stroke="#fff" stroke-width="2.4" stroke-linejoin="miter"/></svg>
<svg class="ic z4" style="left:41.2px;top:524.1px" width="18.6" height="20.6" viewBox="0 0 18.6 20.6" ><g fill="none" stroke="#e4c917" stroke-width="1.5" stroke-linecap="round" stroke-linejoin="round" ><rect x="0.8" y="3.2" width="17" height="16.6" rx="1.6"/><path d="M0.8 7.6H17.8M5.2 0.8V3.2M13.6 0.8V3.2"/></g><g fill="#e4c917"><rect x="3.9" y="10.4" width="2.6" height="2.4" rx="0.5"/><rect x="8" y="10.4" width="2.6" height="2.4" rx="0.5"/><rect x="12.1" y="10.4" width="2.6" height="2.4" rx="0.5"/><rect x="3.9" y="14.2" width="2.6" height="2.4" rx="0.5"/><rect x="8" y="14.2" width="2.6" height="2.4" rx="0.5"/><rect x="12.1" y="14.2" width="2.6" height="2.4" rx="0.5"/></g></svg>
<svg class="ic z4" style="left:17.9px;top:578.4px" width="9.8" height="13.4" viewBox="0 0 9.8 13.4" ><path d="M1.6 1.2 L8.200000000000001 6.7 L1.6 12.200000000000001" fill="none" stroke="#fff" stroke-width="2.4" stroke-linejoin="miter"/></svg>
<svg class="ic z4" style="left:40.2px;top:575.8px" width="21" height="18.4" viewBox="0 0 21 18.4" ><g fill="none" stroke="#8c4494" stroke-width="1.4" stroke-linecap="round" stroke-linejoin="round" ><rect x="0.8" y="0.8" width="19.4" height="5.4" rx="1.4"/><rect x="0.8" y="6.5" width="19.4" height="5.4" rx="1.4"/><rect x="0.8" y="12.2" width="19.4" height="5.4" rx="1.4"/></g><g stroke="#8c4494" stroke-width="1" fill="none"><path d="M13.4 3.5H17.6M13.4 9.2H17.6M13.4 14.9H17.6" stroke-dasharray="1.6 0.9"/></g></svg>
<svg class="ic z4" style="left:17.9px;top:629.1px" width="9.8" height="13.4" viewBox="0 0 9.8 13.4" ><path d="M1.6 1.2 L8.200000000000001 6.7 L1.6 12.200000000000001" fill="none" stroke="#fff" stroke-width="2.4" stroke-linejoin="miter"/></svg>
<svg class="ic z4" style="left:40.2px;top:626.5px" width="21" height="18.4" viewBox="0 0 21 18.4" ><g fill="none" stroke="#8c4494" stroke-width="1.4" stroke-linecap="round" stroke-linejoin="round" ><rect x="0.8" y="0.8" width="19.4" height="5.4" rx="1.4"/><rect x="0.8" y="6.5" width="19.4" height="5.4" rx="1.4"/><rect x="0.8" y="12.2" width="19.4" height="5.4" rx="1.4"/></g><g stroke="#8c4494" stroke-width="1" fill="none"><path d="M13.4 3.5H17.6M13.4 9.2H17.6M13.4 14.9H17.6" stroke-dasharray="1.6 0.9"/></g></svg>
<svg class="ic z4" style="left:17.9px;top:679.8000000000001px" width="9.8" height="13.4" viewBox="0 0 9.8 13.4" ><path d="M1.6 1.2 L8.200000000000001 6.7 L1.6 12.200000000000001" fill="none" stroke="#fff" stroke-width="2.4" stroke-linejoin="miter"/></svg>
<svg class="ic z4" style="left:40px;top:677.2px" width="21.2" height="18.4" viewBox="0 0 21.2 18.4" ><g fill="none" stroke="#e4c917" stroke-width="1.5" stroke-linecap="round" stroke-linejoin="round" ><rect x="0.8" y="0.8" width="19.6" height="4.6" rx="1.4"/><path d="M2.2 5.4V16.4Q2.2 17.6 3.4 17.6H17.8Q19 17.6 19 16.4V5.4"/><path d="M8.2 8.8H13"/></g></svg>
<svg class="ic z4" style="left:17.9px;top:730.5px" width="9.8" height="13.4" viewBox="0 0 9.8 13.4" ><path d="M1.6 1.2 L8.200000000000001 6.7 L1.6 12.200000000000001" fill="none" stroke="#fff" stroke-width="2.4" stroke-linejoin="miter"/></svg>
<svg class="ic z4" style="left:40.2px;top:727.9px" width="21" height="18.4" viewBox="0 0 21 18.4" ><g fill="none" stroke="#8c4494" stroke-width="1.4" stroke-linecap="round" stroke-linejoin="round" ><rect x="0.8" y="0.8" width="19.4" height="5.4" rx="1.4"/><rect x="0.8" y="6.5" width="19.4" height="5.4" rx="1.4"/><rect x="0.8" y="12.2" width="19.4" height="5.4" rx="1.4"/></g><g stroke="#8c4494" stroke-width="1" fill="none"><path d="M13.4 3.5H17.6M13.4 9.2H17.6M13.4 14.9H17.6" stroke-dasharray="1.6 0.9"/></g></svg>
<svg class="ic z4" style="left:17.9px;top:781.2px" width="9.8" height="13.4" viewBox="0 0 9.8 13.4" ><path d="M1.6 1.2 L8.200000000000001 6.7 L1.6 12.200000000000001" fill="none" stroke="#fff" stroke-width="2.4" stroke-linejoin="miter"/></svg>
<svg class="ic z4" style="left:40px;top:778.6px" width="21.2" height="18.4" viewBox="0 0 21.2 18.4" ><g fill="none" stroke="#e4c917" stroke-width="1.5" stroke-linecap="round" stroke-linejoin="round" ><rect x="0.8" y="0.8" width="19.6" height="4.6" rx="1.4"/><path d="M2.2 5.4V16.4Q2.2 17.6 3.4 17.6H17.8Q19 17.6 19 16.4V5.4"/><path d="M8.2 8.8H13"/></g></svg>
<svg class="ic z4" style="left:15.3px;top:833.1999999999999px" width="14.4" height="8.6" viewBox="0 0 14.4 8.6" ><path d="M1.2 1.4 L7.2 7.0 L13.200000000000001 1.4" fill="none" stroke="#fff" stroke-width="2.2"/></svg>
<svg class="ic z4" style="left:40px;top:829.3px" width="21.2" height="18.4" viewBox="0 0 21.2 18.4" ><g fill="none" stroke="#e4c917" stroke-width="1.5" stroke-linecap="round" stroke-linejoin="round" ><rect x="0.8" y="0.8" width="19.6" height="4.6" rx="1.4"/><path d="M2.2 5.4V16.4Q2.2 17.6 3.4 17.6H17.8Q19 17.6 19 16.4V5.4"/><path d="M8.2 8.8H13"/></g></svg>
<svg class="ic z4" style="left:66.2px;top:878.9px" width="19" height="20.5" viewBox="0 0 19 20.5" ><g fill="none" stroke="#e4c917" stroke-width="1.4" stroke-linecap="round" stroke-linejoin="round"  stroke-linejoin="miter"><path d="M18.2 16.4H3.2Q0.8 16.4 0.8 18.1Q0.8 19.7 3.2 19.7H18.2"/><path d="M0.8 18V3Q0.8 0.8 3 0.8H18.2V16.4"/><path d="M3.6 0.8V16.4"/><path d="M7.2 5.4H15M7.2 8.2H15"/><path d="M17 16.4V19.7"/></g></svg>
<svg class="ic z4" style="left:67.8px;top:929.7px" width="16" height="20.4" viewBox="0 0 16 20.4" ><g fill="none" stroke="#e4c917" stroke-width="1.4" stroke-linecap="round" stroke-linejoin="round"  stroke-linejoin="miter"><path d="M0.8 2Q0.8 0.8 2 0.8H10.2L15.2 5.8V18.4Q15.2 19.6 14 19.6H2Q0.8 19.6 0.8 18.4Z"/><path d="M10.2 0.8V5.8H15.2"/><path d="M4 10.6H12M4 13.2H12M4 15.8H12"/></g></svg>
<span class="t" style="font-size:16px;line-height:20px;color:#8a8a8a;left:49.60px;top:155.20px;z-index:4;">Search</span>
<span class="t" style="font-size:17.5px;line-height:22px;color:#fff;letter-spacing:0.254px;-webkit-text-stroke:0.3px #fff;left:66.00px;top:206.80px;z-index:4;">Tasks</span>
<span class="t" style="font-size:17.5px;line-height:22px;color:#fff;letter-spacing:0.121px;-webkit-text-stroke:0.3px #fff;left:65.00px;top:257.50px;z-index:4;">Dashboards</span>
<span class="t" style="font-size:17.5px;line-height:22px;color:#fff;letter-spacing:-0.254px;-webkit-text-stroke:0.3px #fff;left:66.00px;top:319.80px;z-index:4;">ADMIN - Gateway</span>
<span class="t" style="font-size:17.5px;line-height:22px;color:#fff;letter-spacing:-0.318px;-webkit-text-stroke:0.3px #fff;left:66.00px;top:370.50px;z-index:4;">ADMIN - PULSE Config</span>
<span class="t" style="font-size:17.5px;line-height:22px;color:#fff;letter-spacing:0.092px;-webkit-text-stroke:0.3px #fff;left:65.00px;top:421.20px;z-index:4;">MDM - Controlled Vocabularies</span>
<span class="t" style="font-size:17.5px;line-height:22px;color:#fff;letter-spacing:0.233px;-webkit-text-stroke:0.3px #fff;left:65.00px;top:471.90px;z-index:4;">MDM - Import / Export</span>
<span class="t" style="font-size:17.5px;line-height:22px;color:#fff;letter-spacing:-0.056px;-webkit-text-stroke:0.3px #fff;left:65.00px;top:522.60px;z-index:4;">MDM - Product Core Data</span>
<span class="t" style="font-size:17.5px;line-height:22px;color:#fff;letter-spacing:-0.135px;-webkit-text-stroke:0.3px #fff;left:66.00px;top:573.30px;z-index:4;">QUAL - Learning Management</span>
<span class="t" style="font-size:17.5px;line-height:22px;color:#fff;letter-spacing:-0.151px;-webkit-text-stroke:0.3px #fff;left:66.00px;top:624.00px;z-index:4;">QUAL - Quality Management</span>
<span class="t" style="font-size:17.5px;line-height:22px;color:#fff;letter-spacing:-0.016px;-webkit-text-stroke:0.3px #fff;left:65.00px;top:674.70px;z-index:4;">REG - Medical Device Information</span>
<span class="t" style="font-size:17.5px;line-height:22px;color:#fff;letter-spacing:-0.209px;-webkit-text-stroke:0.3px #fff;left:65.00px;top:725.40px;z-index:4;">REG - Regulatory Documents</span>
<span class="t" style="font-size:17.5px;line-height:22px;color:#fff;letter-spacing:-0.062px;-webkit-text-stroke:0.3px #fff;left:65.00px;top:776.10px;z-index:4;">REG - Regulatory Information</span>
<span class="t" style="font-size:17.5px;line-height:22px;color:#fff;letter-spacing:-0.145px;-webkit-text-stroke:0.3px #fff;left:65.00px;top:826.80px;z-index:4;">REG - Regulatory Intelligence</span>
<span class="t" style="font-size:17.5px;line-height:22px;color:#fff;font-weight:700;letter-spacing:-0.538px;left:90.60px;top:877.00px;z-index:4;">Health Authority Document</span>
<span class="t" style="font-size:17.5px;line-height:22px;color:#fff;letter-spacing:0.098px;-webkit-text-stroke:0.3px #fff;left:90.20px;top:927.80px;z-index:4;">Intelligence Data</span>
</nav>
</div>
</body></html>
